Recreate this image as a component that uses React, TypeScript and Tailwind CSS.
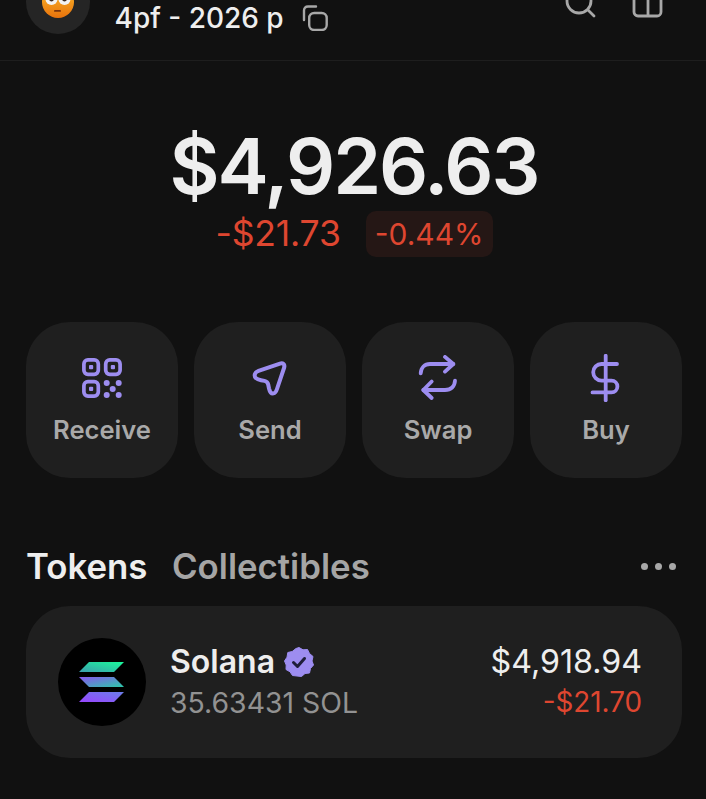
const red = "text-[#de4630]";

function QrIcon() {
  return (
    <svg width="40" height="40" viewBox="0 0 40 40" fill="none" stroke="#9d8df0" strokeWidth="3.7">
      <rect x="1.9" y="1.9" width="14.4" height="14.4" rx="4" />
      <rect x="23.7" y="1.9" width="14.4" height="14.4" rx="4" />
      <rect x="1.9" y="23.7" width="14.4" height="14.4" rx="4" />
      <g fill="#9d8df0" stroke="none">
        <rect x="7" y="7" width="4.2" height="4.2" rx="1" />
        <rect x="28.8" y="7" width="4.2" height="4.2" rx="1" />
        <rect x="7" y="28.8" width="4.2" height="4.2" rx="1" />
        <circle cx="24.7" cy="25" r="3" />
        <circle cx="36.7" cy="25" r="3" />
        <circle cx="30.7" cy="31" r="3" />
        <circle cx="24.7" cy="37" r="3" />
        <circle cx="36.7" cy="37" r="3" />
      </g>
    </svg>
  );
}

function SendIcon() {
  return (
    <svg width="40" height="40" viewBox="0 0 40 40" fill="none" stroke="#9d8df0" strokeWidth="4" strokeLinejoin="round">
      <path d="M30 5.6L8.5 12.8C4.6 14.2 3.6 18 6 20.2C7 21.2 8.8 21.8 11 22.2L14.5 22.9C16.8 23.4 17.8 24.5 18.2 26.5L19 30.5C19.8 34 21.5 35.8 23.5 35.4C25.2 35.1 26.2 33.5 27 31L34.2 9.5C35 6.5 33 4.7 30 5.6Z" />
    </svg>
  );
}

function SwapIcon() {
  return (
    <svg width="40" height="46" viewBox="0 0 40 46" fill="none" stroke="#9d8df0" strokeWidth="3.8" strokeLinecap="round" strokeLinejoin="round">
      <path d="M2.7 18.3C3 12.5 6.5 9 12 9H35.3" />
      <path d="M27 1.9L35.3 9L27 16.6" />
      <path d="M37 25.7C36.7 31.5 33 35 27 35H5.3" />
      <path d="M13.7 26.5L5.3 35L13.7 43" />
    </svg>
  );
}

function DollarIcon() {
  return (
    <svg width="40" height="48" viewBox="0 0 40 48" fill="none" stroke="#9d8df0" strokeWidth="3.8" strokeLinecap="round" strokeLinejoin="round">
      <path d="M19.7 1.7V46.3" />
      <path d="M31 10H15.5a8.3 8.3 0 0 0 0 16.6h10a5.9 5.9 0 0 1 0 11.8H6.5" />
    </svg>
  );
}

function Action({ label, children }: { label: string; children: React.ReactNode }) {
  return (
    <div className="flex h-[156px] w-[152px] shrink-0 flex-col items-center rounded-[44px] bg-[#1f1f1f] pt-[36px]">
      <div className="flex h-[40px] items-center justify-center">{children}</div>
      <div className="mt-[16px] text-[25.6px] leading-[32px] font-semibold text-[#a9a9a9]">{label}</div>
    </div>
  );
}

function Emoji() {
  return (
    <svg width="32" height="32" viewBox="0 0 32 32">
      <defs>
        <linearGradient id="face" x1="0" y1="0" x2="0" y2="1">
          <stop offset="0" stopColor="#fbc02d" />
          <stop offset="1" stopColor="#e8720c" />
        </linearGradient>
      </defs>
      <circle cx="16" cy="16" r="16" fill="url(#face)" />
      <circle cx="9.5" cy="13" r="6" fill="#f2f2f2" />
      <circle cx="22.5" cy="13" r="6" fill="#f2f2f2" />
      <circle cx="9.5" cy="13" r="2.4" fill="#3a2a20" />
      <circle cx="22.5" cy="13" r="2.4" fill="#3a2a20" />
      <rect x="12" y="24" width="7" height="1.8" rx="0.9" fill="#7a330c" />
    </svg>
  );
}

function SolanaLogo() {
  return (
    <svg width="46" height="40" viewBox="0 0 46 40">
      <defs>
        <linearGradient id="sol1" x1="0" y1="1" x2="1" y2="0">
          <stop offset="0" stopColor="#3d9dae" />
          <stop offset="1" stopColor="#19fb9b" />
        </linearGradient>
        <linearGradient id="sol2" x1="0" y1="0" x2="1" y2="1">
          <stop offset="0" stopColor="#8a55f0" />
          <stop offset="1" stopColor="#2bc9a8" />
        </linearGradient>
        <linearGradient id="sol3" x1="0" y1="1" x2="1" y2="0">
          <stop offset="0" stopColor="#9945ff" />
          <stop offset="1" stopColor="#6a7fe8" />
        </linearGradient>
      </defs>
      <polygon points="10,0 45,0 35,10 0,10" fill="url(#sol1)" />
      <polygon points="0,15 35,15 45,25 10,25" fill="url(#sol2)" />
      <polygon points="10,30 45,30 35,40 0,40" fill="url(#sol3)" />
    </svg>
  );
}

function Verified() {
  return (
    <svg width="30" height="30" viewBox="0 0 30 30">
      <polygon
        points="15,0.5 19,2.8 23.5,2.5 25.5,6.5 29,9.5 28,14 29.5,18 26.5,21.5 25.5,26 21,26.5 17.5,29.5 13,29 8.5,28.5 6,24.8 2,22.5 2.2,18 0.5,14 3,10.2 3.8,5.5 8.2,4.5 12,1.5"
        fill="#9d8df0"
        stroke="#9d8df0"
        strokeLinejoin="round"
      />
      <path d="M9.5 15.5L13.5 19.5L20.5 11.5" fill="none" stroke="#1f1f3a" strokeWidth="3" strokeLinecap="round" strokeLinejoin="round" />
    </svg>
  );
}

export default function App() {
  return (
    <div className="h-[799px] w-[706px] overflow-hidden bg-[#111111] font-['Inter',sans-serif]">
      <header className="flex h-[61px] overflow-hidden border-b border-[#1e1e1e] pl-[26px]">
        <div className="mt-[-30px] flex h-16 w-16 shrink-0 items-center justify-center rounded-full bg-[#252525]">
          <Emoji />
        </div>
        <div className="ml-[24.5px] h-[36px] text-[28px] leading-[36px] font-medium whitespace-nowrap text-[#eeeeee]">4pf - 2026 p</div>
        <svg className="ml-[18px] mt-[5px] shrink-0" width="26" height="26" viewBox="0 0 26 26" fill="none" stroke="#a8a8a8" strokeWidth="2.4" strokeLinecap="round">
          <rect x="7.2" y="8" width="17.5" height="17" rx="5" />
          <path d="M2 15V5.5C2 3 3.5 1.5 6 1.5H14" />
        </svg>
        <svg className="ml-[237px] mt-[-12px] shrink-0" width="32" height="30" viewBox="0 0 32 30" fill="none" stroke="#a8a8a8" strokeWidth="2.8" strokeLinecap="round">
          <circle cx="14" cy="13" r="12" />
          <path d="M23 22L29 28" />
        </svg>
        <svg className="ml-[35px] mt-[-14px] shrink-0" width="32" height="32" viewBox="0 0 32 32" fill="none" stroke="#a8a8a8" strokeWidth="2.8">
          <rect x="2" y="1" width="27" height="29" rx="4" />
          <path d="M16 1V30" />
        </svg>
      </header>

      <section className="flex flex-col items-center pt-[60px] pl-[2px]">
        <div className="text-[77px] leading-[90px] font-semibold tracking-[-2px] text-[#eeeeee]">$4,926.63</div>
        <div className="flex items-center">
          <span className={`text-[35.6px] leading-[46px] tracking-[-0.2px] ${red}`}>-$21.73</span>
          <span className={`ml-[25px] rounded-[10px] bg-[#251715] px-[9px] text-[30px] leading-[46px] ${red}`}>-0.44%</span>
        </div>
      </section>

      <section className="mt-[65px] flex gap-4 pl-[26px] pr-[24px]">
        <Action label="Receive"><QrIcon /></Action>
        <Action label="Send"><SendIcon /></Action>
        <Action label="Swap"><SwapIcon /></Action>
        <Action label="Buy"><DollarIcon /></Action>
      </section>

      <section className="mt-[66px] flex items-center pl-[26px] pr-[30px]">
        <span className="text-[34.8px] leading-[44px] font-semibold text-[#eeeeee]">Tokens</span>
        <span className="ml-[24.5px] text-[34.8px] leading-[44px] font-semibold text-[#a5a5a5]">Collectibles</span>
        <div className="ml-auto flex gap-[7px]">
          <span className="h-[7px] w-[7px] rounded-full bg-[#a8a8a8]" />
          <span className="h-[7px] w-[7px] rounded-full bg-[#a8a8a8]" />
          <span className="h-[7px] w-[7px] rounded-full bg-[#a8a8a8]" />
        </div>
      </section>

      <section className="ml-[26px] mr-[24px] mt-[18px] flex h-[152px] items-center rounded-[44px] bg-[#1f1f1f] pl-[32px] pr-[40px]">
        <div className="flex h-[88px] w-[88px] items-center justify-center rounded-full bg-black">
          <SolanaLogo />
        </div>
        <div className="ml-[24px] flex flex-col pt-[1px]">
          <div className="flex items-center">
            <span className="text-[32px] leading-[40px] font-semibold text-[#eeeeee]">Solana</span>
            <span className="ml-[9px]"><Verified /></span>
          </div>
          <span className="text-[28.4px] leading-[41px] text-[#929292]">35.63431 SOL</span>
        </div>
        <div className="ml-auto flex flex-col items-end pt-[1px]">
          <span className="text-[32.2px] leading-[40px] text-[#eeeeee]">$4,918.94</span>
          <span className={`text-[27.8px] leading-[41px] ${red}`}>-$21.70</span>
        </div>
      </section>
    </div>
  );
}
